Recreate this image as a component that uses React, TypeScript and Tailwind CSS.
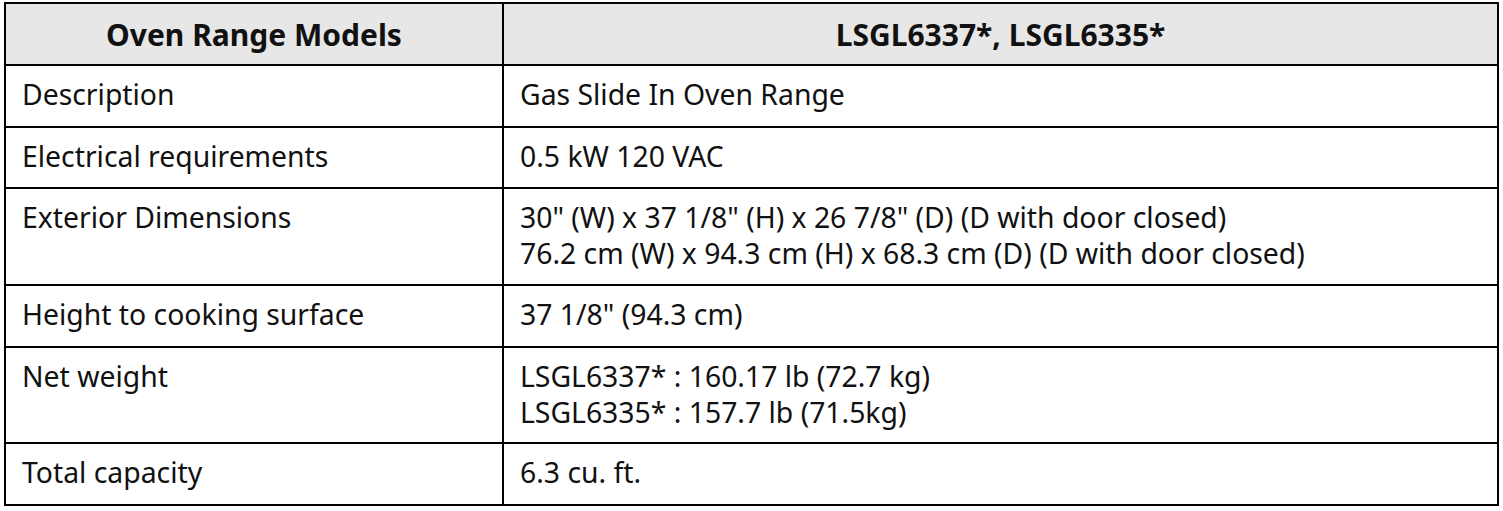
import React from "react";

const rows: { label: string; value: string[]; h: string }[] = [
  { label: "Description", value: ["Gas Slide In Oven Range"], h: "h-[60px]" },
  { label: "Electrical requirements", value: ["0.5 kW 120 VAC"], h: "h-[59px]" },
  {
    label: "Exterior Dimensions",
    value: [
      '30" (W) x 37 1/8" (H) x 26 7/8" (D) (D with door closed)',
      "76.2 cm (W) x 94.3 cm (H) x 68.3 cm (D) (D with door closed)",
    ],
    h: "h-[95px]",
  },
  { label: "Height to cooking surface", value: ['37 1/8" (94.3 cm)'], h: "h-[60px]" },
  {
    label: "Net weight",
    value: ["LSGL6337* : 160.17 lb (72.7 kg)", "LSGL6335* : 157.7 lb (71.5kg)"],
    h: "h-[94px]",
  },
  { label: "Total capacity", value: ["6.3 cu. ft."], h: "h-[60px]" },
];

export default function App() {
  return (
    <div
      className="w-[1503px] h-[511px] bg-white pt-[2px] pl-[4px] text-[#111]"
      style={{ fontFamily: '"Noto Sans", "Open Sans", sans-serif' }}
    >
      <div className="w-[1495px] border-2 border-black">
        <div className="grid grid-cols-[498px_1fr] bg-[#e7e7e7] h-[60px]">
          <div className="border-r-2 border-black flex items-center justify-center text-[30px] font-bold">
            Oven Range Models
          </div>
          <div className="flex items-center justify-center text-[30px] font-bold">
            LSGL6337*, LSGL6335*
          </div>
        </div>
        {rows.map((r) => (
          <div
            key={r.label}
            className="grid grid-cols-[498px_1fr] border-t-2 border-black"
          >
            <div className={`${r.h} border-r-2 border-black pt-[10px] pl-4 text-[28.35px] leading-[36px]`}>
              {r.label}
            </div>
            <div className={`${r.h} pt-[10px] pl-4 text-[28.35px] leading-[36px]`}>
              {r.value.map((v) => (
                <div key={v}>{v}</div>
              ))}
            </div>
          </div>
        ))}
      </div>
    </div>
  );
}
